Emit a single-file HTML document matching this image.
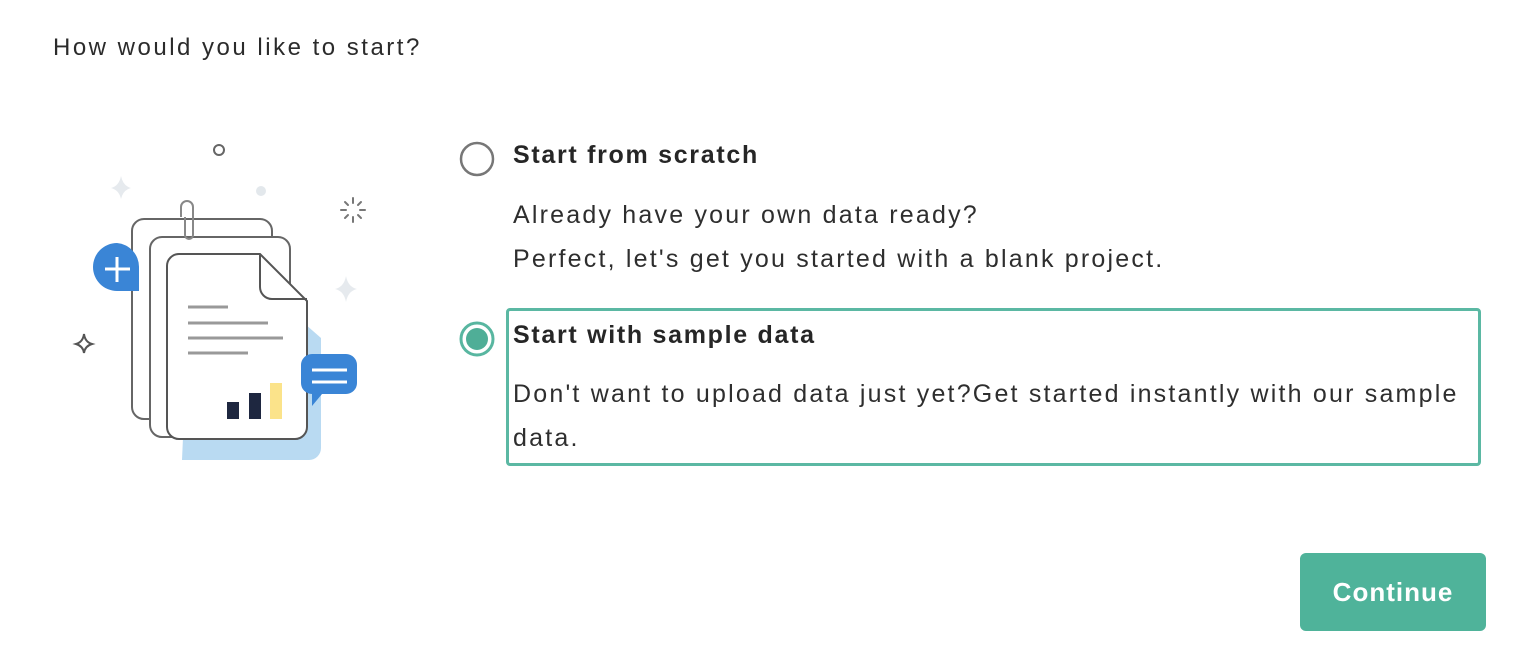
<!DOCTYPE html>
<html><head><style>
body{margin:0;width:1536px;height:662px;background:#fff;font-family:"Liberation Sans",sans-serif;color:#2b2b2b;position:relative;overflow:hidden}
.a{position:absolute;white-space:nowrap}
.t{font-size:24px;letter-spacing:2.5px}
.b{font-size:25px;font-weight:bold;color:#262626;letter-spacing:1.7px}
.p{font-size:25px;color:#2e2e2e;letter-spacing:2.2px}
</style></head><body>
<div class="a t" style="left:53px;top:34px">How would you like to start?</div>
<svg class="a" style="left:0;top:0" width="460" height="480" viewBox="0 0 460 480">
<circle cx="219" cy="150" r="5" fill="none" stroke="#666" stroke-width="2"/>
<circle cx="261" cy="191" r="5" fill="#e3e8ec"/>
<path d="M121 176 Q123 186 131 188 Q123 190 121 199 Q119 190 111 188 Q119 186 121 176Z" fill="#e6eaee"/>
<path d="M346 276 Q348 287 357 289 Q348 291 346 302 Q344 291 335 289 Q344 287 346 276Z" fill="#e6eaee"/>
<path d="M84 334 Q85 342 92 344 Q85 346 84 353 Q83 346 76 344 Q83 342 84 334Z" fill="none" stroke="#555" stroke-width="2"/>
<g stroke="#777" stroke-width="2" stroke-linecap="round"><path d="M353 198v5M353 217v5M341 210h5M360 210h5M345 202l3 3M358 215l3 3M361 202l-3 3M345 218l3-3"/></g>
<rect x="132" y="219" width="140" height="200" rx="12" fill="#fff" stroke="#666" stroke-width="2"/>
<rect x="150" y="237" width="140" height="200" rx="12" fill="#fff" stroke="#666" stroke-width="2"/>
<path d="M181 217 v-10 a6 6 0 0 1 12 0 v28 a4 4 0 0 1 -8 0 v-18" fill="none" stroke="#888" stroke-width="2"/>
<path d="M190 282 h67 l64 56 v110 a12 12 0 0 1 -12 12 h-127 z" fill="#b9daf2"/>
<path d="M179 254 h81 l47 47 v126 a12 12 0 0 1 -12 12 h-116 a12 12 0 0 1 -12 -12 v-161 a12 12 0 0 1 12 -12z" fill="#fff" stroke="#555" stroke-width="2"/>
<path d="M260 254 v33 a12 12 0 0 0 12 12 h35" fill="none" stroke="#555" stroke-width="2"/>
<g stroke="#999" stroke-width="3"><path d="M188 307h40M188 323h80M188 338h95M188 353h60"/></g>
<rect x="227" y="402" width="12" height="17" fill="#1e2740"/>
<rect x="249" y="393" width="12" height="26" fill="#1e2740"/>
<rect x="270" y="383" width="12" height="36" fill="#fbe38a"/>
<path d="M117 243 a24 24 0 1 0 0 48 h22 v-24 a24 24 0 0 0 -22 -24z" fill="#3a85d6"/>
<path d="M105 269h25M117 257v25" stroke="#fff" stroke-width="3"/>
<path d="M312 354 h34 a11 11 0 0 1 11 11 v18 a11 11 0 0 1 -11 11 h-24 l-10 12 v-12 a11 11 0 0 1 -11 -11 v-18 a11 11 0 0 1 11 -11z" fill="#3a85d6"/>
<path d="M312 370h35M312 382h35" stroke="#fff" stroke-width="3"/>
</svg>
<svg class="a" style="left:458px;top:140px" width="40" height="40"><circle cx="19" cy="19" r="16" fill="#fff" stroke="#777" stroke-width="2.5"/></svg>
<svg class="a" style="left:458px;top:320px" width="40" height="40"><circle cx="19" cy="19" r="16" fill="#fff" stroke="#58b6a0" stroke-width="3"/><circle cx="19" cy="19" r="11" fill="#4fae97"/></svg>
<div class="a b" style="left:513px;top:141px">Start from scratch</div>
<div class="a p" style="left:513px;top:201px">Already have your own data ready?</div>
<div class="a p" style="left:513px;top:245px">Perfect, let's get you started with a blank project.</div>
<div class="a" style="left:506px;top:308px;width:969px;height:152px;border:3px solid #5bb8a3;border-radius:4px"></div>
<div class="a b" style="left:513px;top:321px">Start with sample data</div>
<div class="a p" style="left:513px;top:380px">Don't want to upload data just yet?Get started instantly with our sample</div>
<div class="a p" style="left:513px;top:424px">data.</div>
<div class="a" style="left:1300px;top:553px;width:186px;height:78px;background:#4fb39a;border-radius:6px;color:#fff;font-size:26px;font-weight:bold;text-align:center;line-height:78px;letter-spacing:1px">Continue</div>
</body></html>
